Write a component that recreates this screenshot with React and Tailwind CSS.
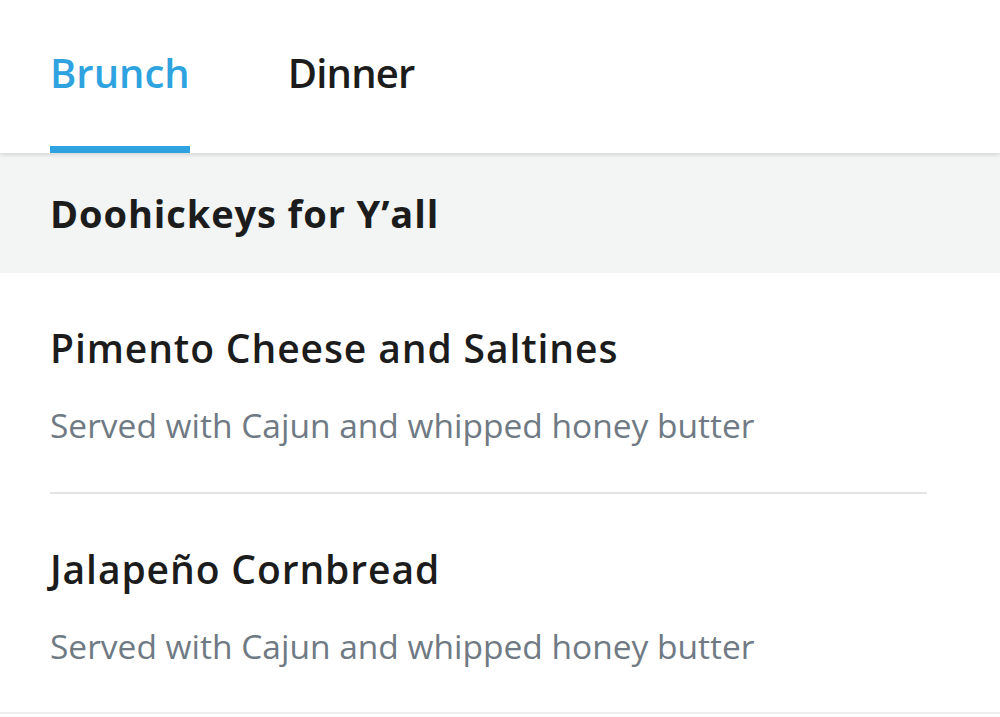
import { useState } from 'react';

const items = [
  { id: 1, name: 'Pimento Cheese and Saltines', desc: 'Served with Cajun and whipped honey butter' },
  { id: 2, name: 'Jalapeño Cornbread', desc: 'Served with Cajun and whipped honey butter' },
];

const App = () => {
  const [tab, setTab] = useState('Brunch');

  return (
    <div className="min-h-screen bg-white" style={{ fontFamily: '"Open Sans", Lato, sans-serif' }}>
      {/* Tabs */}
      <div className="relative z-10 flex h-[153px] bg-white px-[50px] gap-[98px] shadow-[0_2px_4px_rgba(0,0,0,0.12)]">
        {['Brunch', 'Dinner'].map((t) => (
          <button
            key={t}
            onClick={() => setTab(t)}
            className={`relative flex h-full items-start pt-[53px] text-[40px] leading-none font-semibold ${
              tab === t ? 'text-[#2ea3e0]' : 'text-[#1c1c1c] tracking-[-0.8px]'
            }`}
          >
            {t}
            {tab === t && <span className="absolute bottom-0 left-0 right-0 h-[7px] bg-[#2ea3e0]" />}
          </button>
        ))}
      </div>

      {/* Section header */}
      <div className="h-[120px] bg-[#f3f5f5] px-[50px] pt-[41px]">
        <h2 className="text-[38px] leading-none font-bold tracking-[0.9px] text-[#1c1c1c]">Doohickeys for Y’all</h2>
      </div>

      {/* Items */}
      <div>
        {items.map((item, i) => (
          <div key={item.id} className="pl-[50px] pr-[73px]">
            <div className={`pt-[55px] pb-[49px] ${i === 0 ? 'border-b-2 border-[#e3e4e5]' : ''}`}>
              <p className="text-[39px] font-semibold leading-none tracking-[0.9px] text-[#1c1c1c]">{item.name}</p>
              <p className="mt-[42px] text-[33.5px] leading-none text-[#6f7a84]">{item.desc}</p>
            </div>
          </div>
        ))}
        <div className="border-b-2 border-[#eeeeee]" />
      </div>
    </div>
  );
};

export default App;
